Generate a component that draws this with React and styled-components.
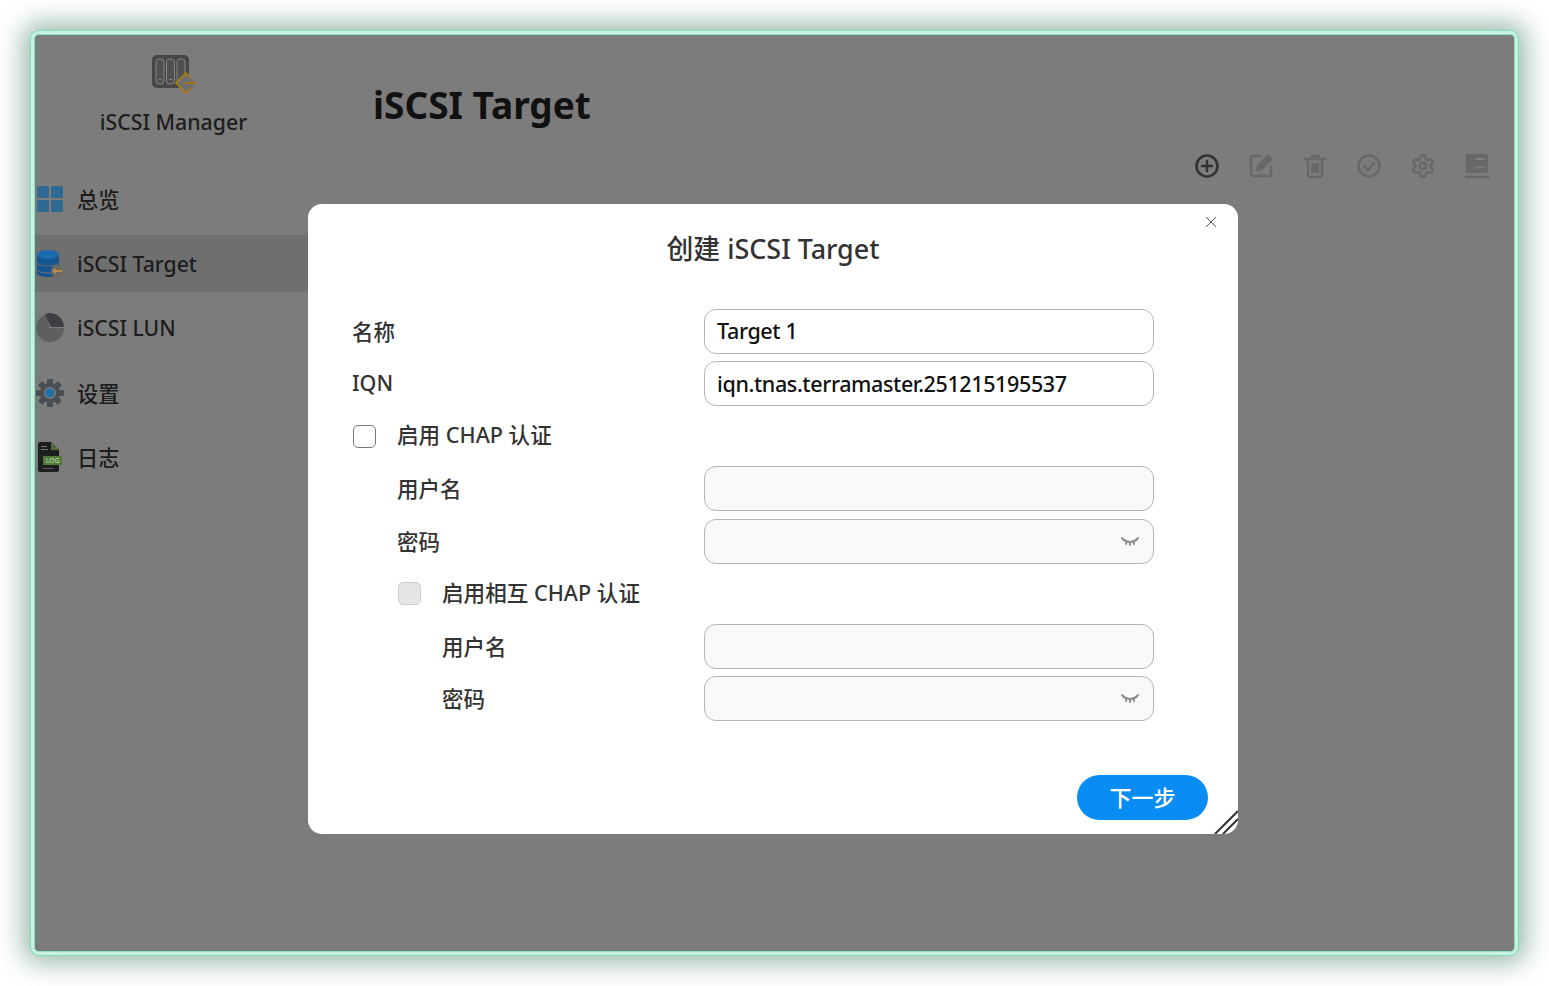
import styled, { createGlobalStyle } from "styled-components";
import { Settings } from "lucide-react";

const FONT = `"Noto Sans", "Noto Sans CJK SC", sans-serif`;

const GlobalStyle = createGlobalStyle`
  html, body {
    margin: 0;
    padding: 0;
    background: #ffffff;
  }
  * {
    box-sizing: border-box;
  }
  body {
    font-family: ${FONT};
  }
`;

function LogoIcon() {
  return (
    <svg width="44" height="39" viewBox="0 0 44 39">
      <rect x="0" y="0" width="37" height="33" rx="5" fill="#474747" />
      {[4, 14.5, 25].map((x) => (
        <g key={x}>
          <rect x={x} y="4" width="8" height="25" rx="3" fill="#505050" stroke="#858585" />
          <rect x={x + 3} y="24" width="2" height="1" fill="#999999" />
        </g>
      ))}
      <path d="M34 18 L24 28 L34 38 L44 28 Z" fill="#6e6e6e" />
      <path d="M39 23 L34 18 L24 28 L34 38 L39 33" fill="none" stroke="#a37c17" strokeWidth="1.800" />
      <path d="M33 28 H44" fill="none" stroke="#a37c17" strokeWidth="1.800" />
    </svg>
  );
}

function OverviewIcon() {
  return (
    <svg width="26" height="26" viewBox="0 0 26 26">
      <rect x="0" y="0" width="12" height="12" rx="1.500" fill="#2f6a93" />
      <rect x="14" y="0" width="12" height="12" rx="1.500" fill="#2f6a93" />
      <rect x="0" y="14" width="12" height="12" rx="1.500" fill="#2f6a93" />
      <rect x="14" y="14" width="12" height="12" rx="1.500" fill="#2f6a93" />
    </svg>
  );
}

function TargetIcon() {
  return (
    <svg width="26" height="28" viewBox="0 0 26 28">
      <ellipse cx="11" cy="4.500" rx="11" ry="4.500" fill="#1c6cb0" />
      <path d="M0 5 C3 10 19 10 22 5 V12.500 C19 16.500 3 16.500 0 12.500 Z" fill="#14558e" />
      <path d="M0 13.500 C3 17.500 19 17.500 22 13.500 V19.500 C19 23.500 3 23.500 0 19.500 Z" fill="#14558e" />
      <path d="M0 20.500 C3 24.500 19 24.500 22 20.500 V24 C19 28 3 28 0 24 Z" fill="#14558e" />
      <circle cx="20" cy="21" r="6" fill="#6d6a60" />
      <path d="M15 21 L19 18 V20 H25 V22 H19 V24 Z" fill="#b98a4a" />
    </svg>
  );
}

function LunIcon() {
  return (
    <svg width="30" height="30" viewBox="0 0 30 30">
      <path d="M14 1 A14 14 0 1 0 29 15 L14 15 Z" fill="#5f5f5f" />
      <path d="M10 1 A14 14 0 0 1 29 14 L16 14 Z" fill="#3f3f44" />
    </svg>
  );
}

function SettingsIcon() {
  return (
    <svg width="28" height="28" viewBox="0 0 28 28">
      <g fill="#4a4f55">
        <circle cx="14" cy="14" r="10" />
        {[0, 45, 90, 135, 180, 225, 270, 315].map((deg) => (
          <rect key={deg} x="11" y="0" width="6" height="6" rx="1" transform={`rotate(${deg} 14 14)`} />
        ))}
      </g>
      <circle cx="14" cy="14" r="6" fill="#7a7a7a" />
      <circle cx="14" cy="14" r="4.500" fill="#1f6fa5" />
    </svg>
  );
}

function LogIcon() {
  return (
    <svg width="26" height="30" viewBox="0 0 26 30">
      <path d="M1 2 Q1 0 3 0 H14 L22 8 V28 Q22 30 20 30 H3 Q1 30 1 28 Z" fill="#1d1f1f" />
      <path d="M14 0 L22 8 H14 Z" fill="#4f6e3a" />
      <rect x="6" y="14" width="19" height="9" fill="#4f7a38" />
      <text x="15.500" y="21" fontSize="7" textAnchor="middle" fill="#b7c9a2" fontFamily="Noto Sans, sans-serif">
        LOG
      </text>
      <rect x="4" y="4" width="6" height="1" fill="#777" />
      <rect x="4" y="7" width="7" height="1" fill="#777" />
      <rect x="5" y="26" width="12" height="1" fill="#555" />
    </svg>
  );
}

function ToolIcon({ children, dark }) {
  return (
    <svg
      width="26"
      height="26"
      viewBox="0 0 26 26"
      fill="none"
      stroke={dark ? "#333333" : "#686868"}
      strokeWidth="2.600"
      strokeLinecap="round"
      strokeLinejoin="round"
    >
      {children}
    </svg>
  );
}

function EyeOff() {
  return (
    <svg width="18" height="10" viewBox="0 0 18 10" fill="none" stroke="#8f8f8f" strokeWidth="2" strokeLinecap="round">
      <path d="M2 2 C6 6 12 6 16 2" />
      <path d="M1 1 L3 3.500 M5.500 4.500 L5 7 M9 5 V8 M12.500 4.500 L13 7 M17 1 L15 3.500" />
    </svg>
  );
}

const menu = [
  { label: "总览", Icon: OverviewIcon },
  { label: "iSCSI Target", Icon: TargetIcon, active: true },
  { label: "iSCSI LUN", Icon: LunIcon },
  { label: "设置", Icon: SettingsIcon },
  { label: "日志", Icon: LogIcon },
];

export default function App() {
  return (
    <>
      <GlobalStyle />
      <Page>
        <AppWindow>
          <Sidebar>
            <Brand>
              <LogoIcon />
              <BrandName>iSCSI Manager</BrandName>
            </Brand>
            <Menu>
              {menu.map(({ label, Icon, active }) => (
                <MenuItem key={label} $active={active}>
                  <MenuIconSlot>
                    <Icon />
                  </MenuIconSlot>
                  <MenuLabel>{label}</MenuLabel>
                </MenuItem>
              ))}
            </Menu>
          </Sidebar>
          <Main>
            <PageTitle>iSCSI Target</PageTitle>
            <Toolbar>
              <ToolIcon dark>
                <circle cx="13" cy="13" r="10.500" />
                <path d="M13 8 V18 M8 13 H18" />
              </ToolIcon>
              <ToolIcon>
                <path d="M12 3 H5 Q3 3 3 5 V21 Q3 23 5 23 H21 Q23 23 23 21 V14" />
                <path d="M9 17 L10 13 L20 3 L23 6 L13 16 Z" fill="#686868" />
              </ToolIcon>
              <ToolIcon>
                <path d="M3 6 H23 M9 6 L10 3 H16 L17 6" />
                <path d="M6 6 V22 Q6 24 8 24 H18 Q20 24 20 22 V6" />
                <rect x="9" y="10" width="8" height="10" fill="#686868" stroke="none" />
              </ToolIcon>
              <ToolIcon>
                <circle cx="13" cy="13" r="10.500" />
                <path d="M8 13 L12 17 L18 10" />
              </ToolIcon>
              <Settings size={26} color="#686868" strokeWidth={2.400} />
              <ToolIcon>
                <rect x="2" y="1" width="22" height="19" rx="1" fill="#686868" stroke="none" />
                <path d="M12 6 H20 M12 14.500 H20" stroke="#7d7d7d" strokeWidth="2" />
                <path d="M2 24 H24" />
              </ToolIcon>
            </Toolbar>
          </Main>

          <Modal>
            <CloseButton>
              <svg width="12" height="12" viewBox="0 0 12 12" stroke="#555555" strokeWidth="1">
                <path d="M1 1 L11 11 M11 1 L1 11" />
              </svg>
            </CloseButton>
            <ModalTitle>创建 iSCSI Target</ModalTitle>
            <Form>
              <FieldRow>
                <FieldLabel>名称</FieldLabel>
                <Field>
                  <TextInput defaultValue="Target 1" />
                </Field>
              </FieldRow>
              <FieldRow>
                <FieldLabel>IQN</FieldLabel>
                <Field>
                  <TextInput defaultValue="iqn.tnas.terramaster.251215195537" />
                </Field>
              </FieldRow>
              <CheckRow>
                <CheckBox />
                <CheckLabel>启用 CHAP 认证</CheckLabel>
              </CheckRow>
              <FieldRow>
                <FieldLabel $indent={1}>用户名</FieldLabel>
                <Field>
                  <TextInput disabled />
                </Field>
              </FieldRow>
              <FieldRow>
                <FieldLabel $indent={1}>密码</FieldLabel>
                <Field>
                  <TextInput disabled />
                  <EyeSlot>
                    <EyeOff />
                  </EyeSlot>
                </Field>
              </FieldRow>
              <CheckRow $indent={1}>
                <CheckBox $disabled />
                <CheckLabel>启用相互 CHAP 认证</CheckLabel>
              </CheckRow>
              <FieldRow>
                <FieldLabel $indent={2}>用户名</FieldLabel>
                <Field>
                  <TextInput disabled />
                </Field>
              </FieldRow>
              <FieldRow>
                <FieldLabel $indent={2}>密码</FieldLabel>
                <Field>
                  <TextInput disabled />
                  <EyeSlot>
                    <EyeOff />
                  </EyeSlot>
                </Field>
              </FieldRow>
            </Form>
            <ModalFooter>
              <NextButton>下一步</NextButton>
            </ModalFooter>
            <ResizeGrip>
              <svg width="24" height="24" viewBox="0 0 24 24" stroke="#333333" strokeWidth="2">
                <path d="M1 24 L24 1 M9 24 L24 9" />
              </svg>
            </ResizeGrip>
          </Modal>
        </AppWindow>
      </Page>
    </>
  );
}

const Page = styled.div`
  width: 1549px;
  height: 986px;
  padding: 31px;
  overflow: hidden;
`;

const AppWindow = styled.div`
  position: relative;
  display: flex;
  width: 1487px;
  height: 924px;
  border: 3px solid #c6f1df;
  border-radius: 8px;
  background: #7c7c7c;
  background-clip: padding-box;
  padding: 1px;
  box-shadow:
    0 0 0 1px #7fdfb8,
    inset 0 0 0 1px #86e2bd,
    0 0 26px 8px rgba(30, 100, 70, 0.45);
`;

const Sidebar = styled.nav`
  width: 273px;
  flex-shrink: 0;
  display: flex;
  flex-direction: column;
  overflow: hidden;
`;

const Brand = styled.div`
  display: flex;
  flex-direction: column;
  align-items: center;
  padding: 20px 0 0 4px;
  height: 135.500px;
`;

const BrandName = styled.div`
  margin-top: 13px;
  font-size: 21.300px;
  font-weight: 500;
  line-height: 30px;
  color: #1d1d1d;
`;

const Menu = styled.ul`
  list-style: none;
  margin: 0;
  padding: 0;
  display: flex;
  flex-direction: column;
  gap: 7.500px;
`;

const MenuItem = styled.li`
  display: flex;
  align-items: center;
  height: 57px;
  font-size: 21.200px;
  font-weight: 500;
  color: #1d1d1d;
  background: ${(p) => (p.$active ? "#6f6f6f" : "transparent")};
`;

const MenuIconSlot = styled.span`
  width: 42px;
  flex-shrink: 0;
  display: flex;
  justify-content: center;
  padding-right: 12px;
  svg {
    flex-shrink: 0;
  }
`;

const MenuLabel = styled.span`
  padding-bottom: 1px;
`;

const Main = styled.main`
  flex: 1;
  min-width: 0;
  padding: 45px 24px 0 65px;
`;

const PageTitle = styled.h1`
  margin: 0;
  font-size: 37px;
  line-height: 50px;
  font-weight: 700;
  color: #111111;
`;

const Toolbar = styled.div`
  display: flex;
  justify-content: flex-end;
  gap: 28px;
  margin-top: 23px;
`;

const Modal = styled.div`
  position: absolute;
  left: 274px;
  top: 170px;
  width: 930px;
  height: 630px;
  display: flex;
  flex-direction: column;
  padding: 0 30px 14px 44px;
  background: #ffffff;
  border-radius: 14px;
  overflow: hidden;
`;

const CloseButton = styled.span`
  position: absolute;
  right: 21px;
  top: 12px;
  line-height: 0;
`;

const ModalTitle = styled.h2`
  margin: 26px 0 0 -44px;
  width: 930px;
  text-align: center;
  font-size: 26.900px;
  line-height: 38px;
  font-weight: 500;
  color: #333333;
`;

const Form = styled.div`
  margin-top: 40.900px;
  display: flex;
  flex-direction: column;
  gap: 7.500px;
`;

const FieldRow = styled.div`
  display: flex;
  align-items: center;
  height: 45px;
`;

const FieldLabel = styled.label`
  width: 352px;
  padding-left: ${(p) => (p.$indent || 0) * 45}px;
  padding-bottom: 2px;
  font-size: 21.500px;
  font-weight: 500;
  color: #333333;
`;

const Field = styled.div`
  position: relative;
  width: 450px;
  height: 45px;
`;

const TextInput = styled.input`
  width: 100%;
  height: 100%;
  padding: 0 12px 1px;
  border: 1px solid #b5b5b5;
  border-radius: 12px;
  font-family: ${FONT};
  font-size: 21.500px;
  font-weight: 500;
  letter-spacing: -0.380px;
  color: #111111;
  background: #ffffff;
  outline: none;
  &:disabled {
    background: #f9f9f9;
  }
`;

const EyeSlot = styled.span`
  position: absolute;
  right: 15px;
  top: 18px;
  line-height: 0;
`;

const CheckRow = styled.div`
  display: flex;
  align-items: center;
  height: 45px;
  margin-left: ${(p) => (p.$indent || 0) * 45 + 1}px;
`;

const CheckBox = styled.span`
  width: 23px;
  height: 23px;
  flex-shrink: 0;
  border: 1px solid ${(p) => (p.$disabled ? "#cccccc" : "#777777")};
  border-radius: 5px;
  background: ${(p) => (p.$disabled ? "#e6e6e6" : "#ffffff")};
`;

const CheckLabel = styled.span`
  margin-left: 21px;
  padding-bottom: 5px;
  font-size: 21.600px;
  font-weight: 500;
  color: #333333;
`;

const ModalFooter = styled.div`
  margin-top: auto;
  display: flex;
  justify-content: flex-end;
`;

const NextButton = styled.button`
  width: 131px;
  height: 45px;
  padding: 0 0 3px;
  border: none;
  border-radius: 23px;
  background: #0a8cf5;
  color: #ffffff;
  font-family: "Noto Sans CJK SC", sans-serif;
  font-size: 22px;
  font-weight: 500;
`;

const ResizeGrip = styled.span`
  position: absolute;
  right: 0;
  bottom: 0;
  line-height: 0;
`;
